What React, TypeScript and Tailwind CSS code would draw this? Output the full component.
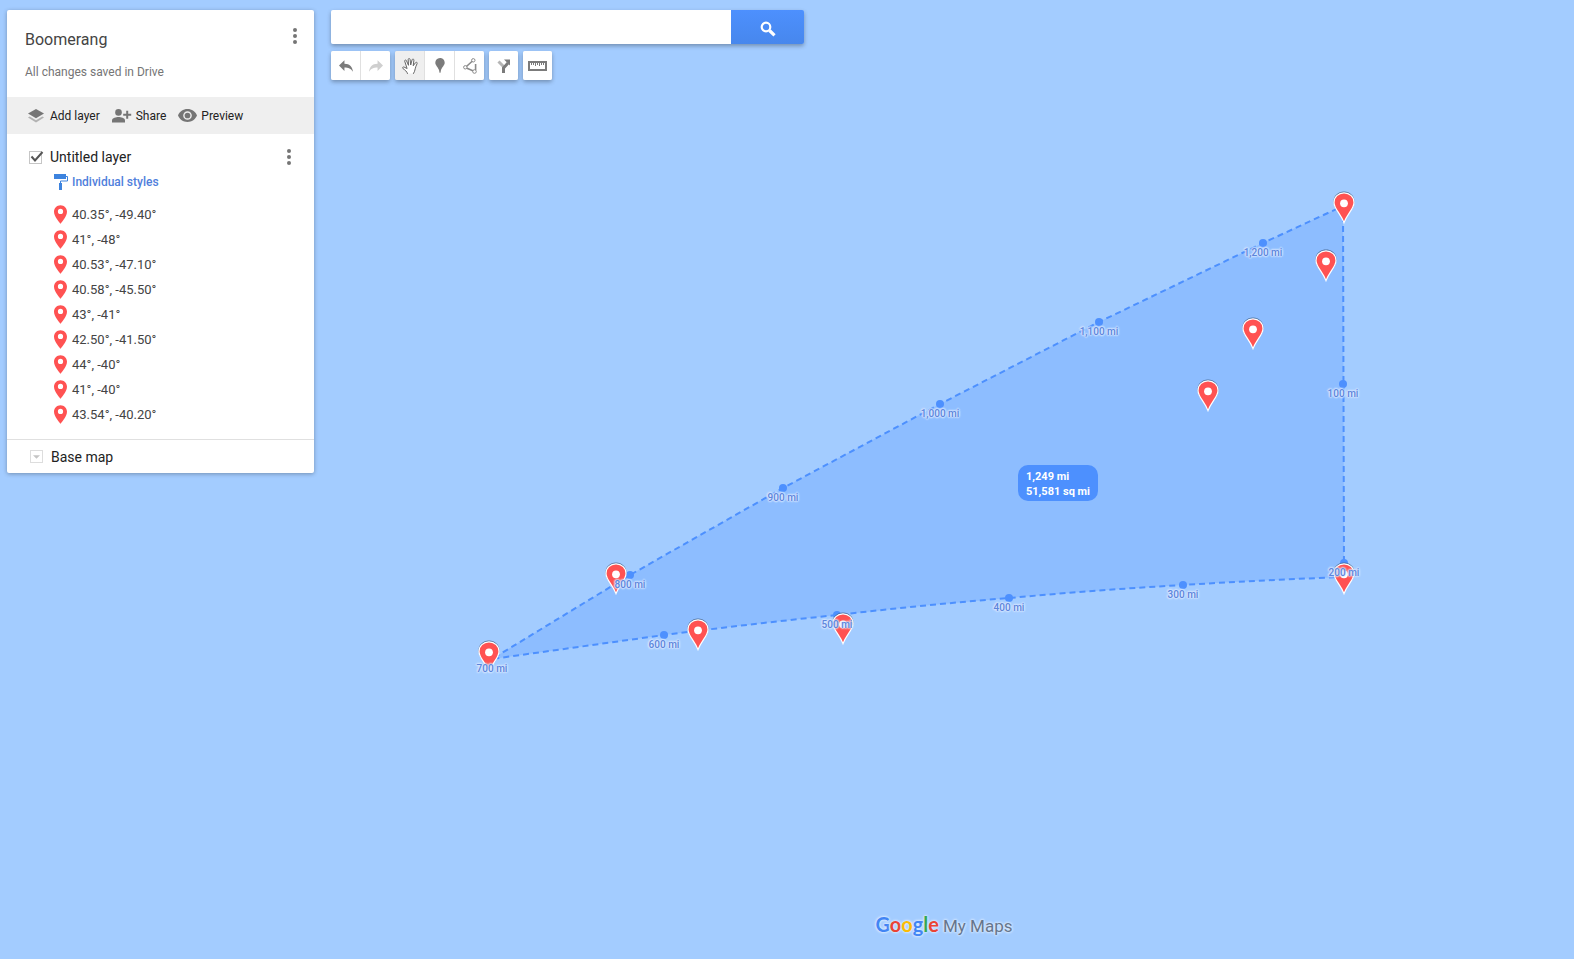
import React, { useState } from "react"
import clsx from "clsx"

const places = [
  "40.35°, -49.40°",
  "41°, -48°",
  "40.53°, -47.10°",
  "40.58°, -45.50°",
  "43°, -41°",
  "42.50°, -41.50°",
  "44°, -40°",
  "41°, -40°",
  "43.54°, -40.20°",
]

// left / top is the tip of the pin
const pins = [
  { x: 1344, y: 224 },
  { x: 1326, y: 282 },
  { x: 1253, y: 350 },
  { x: 1208, y: 412 },
  { x: 616, y: 595 },
  { x: 489, y: 673 },
  { x: 698, y: 651 },
  { x: 843, y: 645 },
  { x: 1344, y: 595 },
]

const miles = [
  { x: 1343, y: 384, label: "100 mi" },
  { x: 1344, y: 563, label: "200 mi" },
  { x: 1183, y: 585, label: "300 mi" },
  { x: 1009, y: 598, label: "400 mi" },
  { x: 837, y: 615, label: "500 mi" },
  { x: 664, y: 635, label: "600 mi" },
  { x: 492, y: 659, label: "700 mi" },
  { x: 630, y: 575, label: "800 mi" },
  { x: 783, y: 488, label: "900 mi" },
  { x: 940, y: 404, label: "1,000 mi" },
  { x: 1099, y: 322, label: "1,100 mi" },
  { x: 1263, y: 243, label: "1,200 mi" },
]

const outline =
  "M1343 206 L1344 577 Q1263 580 1183 585 Q1096 590 1009 598 Q923 605 837 615 Q750 624 664 635 L492 659 L630 575 L783 488 L940 404 L1099 322 L1263 243 Z"

const DotsIcon = () => (
  <svg viewBox="0 0 4 16" className="w-1 h-4 fill-[#757575]">
    <circle cx="2" cy="2" r="2" />
    <circle cx="2" cy="8" r="2" />
    <circle cx="2" cy="14" r="2" />
  </svg>
)

const LayersIcon = () => (
  <svg viewBox="0 0 16 14" className="w-4 h-[14px] fill-[#757575]">
    <path d="M8 0 16 4.600 8 9.200 0 4.600z" />
    <path d="M1.700 7.400 0 8.600 8 13.400 16 8.600 14.300 7.400 8 11.200z" opacity=".5" />
  </svg>
)

const ShareIcon = () => (
  <svg viewBox="0 0 20 14" className="w-5 h-[14px] fill-[#757575]">
    <circle cx="6.500" cy="3.400" r="3.300" />
    <path d="M0 13.500v-2.200c0-2.400 4.300-3.400 6.500-3.400s6.500 1 6.500 3.400v2.200z" />
    <path d="M14.200 1.800h2v3h3v2h-3v3h-2v-3h-3v-2h3z" />
  </svg>
)

const EyeIcon = () => (
  <svg viewBox="1 4.500 22 15" className="w-[19px] h-[13px] fill-[#757575]">
    <path
      fillRule="evenodd"
      d="M12 4.500C7 4.500 2.730 7.610 1 12c1.730 4.390 6 7.500 11 7.500s9.270-3.110 11-7.500c-1.730-4.390-6-7.500-11-7.500zM12 17a5 5 0 1 1 0-10 5 5 0 0 1 0 10z"
    />
    <circle cx="12" cy="12" r="3.300" />
  </svg>
)

const RollerIcon = () => (
  <svg viewBox="0 0 14 16" className="w-[14px] h-4">
    <path d="M0 0h12v5H0zM5 9h3v7H5z" fill="#3d83de" />
    <path d="M12 2.500h1.500v4.500H6.500v2" fill="none" stroke="#3d83de" />
  </svg>
)

const ListPin = () => (
  <svg viewBox="5 2 14 20" className="w-[13px] h-[19px] mb-px fill-[#ff5252]">
    <path d="M12 2C8.130 2 5 5.130 5 9c0 5.250 7 13 7 13s7-7.750 7-13c0-3.870-3.130-7-7-7zm0 9.500a2.800 2.800 0 1 1 0-5.600 2.800 2.800 0 0 1 0 5.600z" />
  </svg>
)

const MapPin = () => (
  <svg viewBox="0 0 24 34" className="block w-6 h-[34px]">
    <path
      d="M12 1.500C6 1.500 1.500 5.900 1.500 11.500c0 7 6.700 11 10.500 20 3.800-9 10.500-13 10.500-20C22.500 5.900 18 1.500 12 1.500z"
      fill="#3b5a80"
      opacity=".75"
    />
    <path
      d="M12 2.900C6.300 2.900 2 7 2 12.400c0 6.400 6.500 10.800 10 20.200 3.500-9.400 10-13.800 10-20.200 0-5.400-4.300-9.500-10-9.500z"
      fill="#ff5252"
      stroke="#fff"
      strokeWidth="1.200"
    />
    <circle cx="12" cy="13.300" r="3.900" fill="#fff" />
  </svg>
)

const ReplyIcon = ({ flip }: { flip?: boolean }) => (
  <svg
    viewBox="3 5 18 15"
    className={clsx("w-[14px] h-3", flip ? "-scale-x-100 fill-[#cfcfcf]" : "fill-[#7b7b7b]")}
  >
    <path d="M10 9.500V5l-7 7 7 7v-4.600c5 0 8.500 1.200 11 5.600-.500-6-4-10.500-11-10.500z" />
  </svg>
)

const HandIcon = () => (
  <svg
    viewBox="0 0 16 16"
    className="w-4 h-4 fill-white stroke-[#666]"
    strokeLinejoin="round"
    strokeLinecap="round"
  >
    <path d="M5.500 15.500C5 13.500 3 12 .9 10.500c-.8-.9.100-1.900 1.200-1.400l3 1.400L2.700 3.200c-.3-1.200 1.200-1.700 1.700-.6L6.500 7.300 6.200 1.500C6.200.2 7.900.2 8.100 1.500L8.700 7l1.400-5.200c.3-1.200 1.900-.9 1.800.4L11.200 7.800 13.500 4.700c.7-1 2.100-.2 1.600.9-.9 2-1.500 3.200-1.900 5.200-.3 1.700-.8 3.200-1.700 4.700" />
  </svg>
)

const MarkerIcon = () => (
  <svg viewBox="0 0 10 15" className="w-[10px] h-[15px] fill-[#7b7b7b]">
    <path d="M5 0C2 0 .3 2.200.3 4.700.3 7.300 2.900 8.800 4 12l.5 2.800h1L6 12c1.100-3.200 3.700-4.700 3.700-7.300C9.700 2.200 8 0 5 0z" />
  </svg>
)

const LineIcon = () => (
  <svg viewBox="0 0 14 16" className="w-[14px] h-4 fill-white stroke-[#8a8a8a]">
    <path d="M2.300 9.500 10 2.500M2.300 9.500l8.700 3.800M12.600 6v6" fill="none" strokeWidth="1.600" />
    <circle cx="10.300" cy="2.300" r="1.700" />
    <circle cx="2.300" cy="9.300" r="1.700" />
    <circle cx="11.500" cy="13.500" r="1.800" />
  </svg>
)

const DirectionsIcon = () => (
  <svg viewBox="0 0 14 14" className="w-[14px] h-[14px]">
    <path d="M1.500 2.500 7 8" stroke="#b5b5b5" strokeWidth="3" fill="none" />
    <path d="M6.500 14V9l4.500-5" stroke="#7b7b7b" strokeWidth="3" fill="none" />
    <path d="M7 .5h6v6z" fill="#7b7b7b" />
  </svg>
)

const RulerIcon = () => (
  <svg viewBox="0 0 19 10" className="w-[19px] h-[10px]">
    <path d="M1 1h17v8H1z" fill="#fff" stroke="#7b7b7b" strokeWidth="2" />
    <path
      d="M3.500 1v3M5.500 1v3M7.500 1v4M9.500 1v3M11.500 1v4M13.500 1v3M15.500 1v3"
      stroke="#7b7b7b"
    />
  </svg>
)

const SearchIcon = () => (
  <svg viewBox="0 0 16 16" className="w-4 h-4 mt-1" fill="none" stroke="#fff">
    <circle cx="6" cy="6" r="4.300" strokeWidth="2.200" />
    <path d="m9.500 9.500 5 4.800" strokeWidth="3.200" />
  </svg>
)

const MapCanvas = () => (
  <div className="absolute inset-0 overflow-hidden">
    <svg className="absolute left-0 top-0 w-[1574px] h-[959px]" viewBox="0 0 1574 959">
      <path
        d={outline}
        fill="#4d90fe"
        fillOpacity=".25"
        stroke="#4d90fe"
        strokeWidth="2"
        strokeDasharray="6 4"
      />
      {miles.map((m) => (
        <circle key={m.label} cx={m.x} cy={m.y} r="4" fill="#4d90fe" />
      ))}
    </svg>
    {pins.map((p) => (
      <div
        key={`${p.x}-${p.y}`}
        className="absolute -translate-x-1/2 -translate-y-full"
        style={{ left: p.x, top: p.y }}
      >
        <MapPin />
      </div>
    ))}
    {miles.map((m) => (
      <span
        key={m.label}
        className="absolute -translate-x-1/2 mt-1 text-[10px] leading-3 font-medium whitespace-nowrap text-[#5c85dc] [text-shadow:0_0_2px_#dbe9ff,0_0_2px_#dbe9ff,0_0_2px_#dbe9ff,0_0_2px_#dbe9ff,0_0_3px_#dbe9ff]"
        style={{ left: m.x, top: m.y }}
      >
        {m.label}
      </span>
    ))}
    <div className="absolute left-[1018px] top-[465px] rounded-[10px] bg-[#4d90fe] px-2 pt-1 pb-[2px] text-[11px] leading-[15px] font-bold text-white">
      <p>1,249 mi</p>
      <p>51,581 sq mi</p>
    </div>
  </div>
)

const SidePanel = () => {
  const [visible, setVisible] = useState(true)

  return (
    <aside className="relative w-[307px] shrink-0 self-start rounded-[2px] bg-white shadow-[0_1px_4px_rgba(0,0,0,0.3)]">
      <header className="flex items-start justify-between pl-[18px] pr-[17px] pt-[18px] h-[87px]">
        <div>
          <h1 className="text-base leading-6 text-[#444]">Boomerang</h1>
          <p className="mt-3 text-xs text-[#757575]">All changes saved in Drive</p>
        </div>
        <button aria-label="Map options">
          <DotsIcon />
        </button>
      </header>
      <nav className="flex items-center h-[37px] bg-[#efefef] pl-[21px] text-xs text-[#222]">
        <button className="flex items-center gap-[6px]">
          <LayersIcon /> Add layer
        </button>
        <button className="flex items-center gap-1 ml-3">
          <ShareIcon /> Share
        </button>
        <button className="flex items-center gap-1 ml-3">
          <EyeIcon /> Preview
        </button>
      </nav>
      <section className="pt-[13px] pb-3">
        <div className="flex items-center justify-between pl-[22px] pr-[23px]">
          <label className="flex items-center gap-2 text-sm text-[#222]">
            <span className="relative block w-[13px] h-[13px]">
              <input
                type="checkbox"
                checked={visible}
                onChange={() => setVisible(!visible)}
                className="block w-[13px] h-[13px] appearance-none border border-[#c6c6c6] bg-white"
              />
              {visible ? (
                <svg
                  viewBox="0 0 15 13"
                  className="pointer-events-none absolute left-0 top-0 w-[15px] h-[13px]"
                >
                  <path d="m2.500 5.500 3.500 4L13.500 1" fill="none" stroke="#555" strokeWidth="2" />
                </svg>
              ) : null}
            </span>
            Untitled layer
          </label>
          <button aria-label="Layer options">
            <DotsIcon />
          </button>
        </div>
        <button className="flex items-center gap-1 ml-[47px] mt-[7px] text-xs font-medium text-[#5080dc]">
          <RollerIcon /> Individual styles
        </button>
        <ul className="mt-3 pl-[47px]">
          {places.map((place) => (
            <li key={place} className="flex items-center gap-[5px] h-[25px] text-[13px] text-[#444]">
              <ListPin />
              {place}
            </li>
          ))}
        </ul>
      </section>
      <button className="flex items-center gap-2 w-full h-[34px] border-t border-[#e0e0e0] pl-[23px] text-sm text-[#222]">
        <span className="flex items-center justify-center w-[13px] h-[13px] border border-[#ddd]">
          <svg viewBox="0 0 8 4" className="w-[7px] h-1 fill-[#c4c4c4]">
            <path d="M0 0h8L4 4z" />
          </svg>
        </span>
        Base map
      </button>
    </aside>
  )
}

const ToolGroup = ({ children }: { children: React.ReactNode }) => (
  <div className="flex gap-px rounded-[2px] bg-[#e0e0e0] overflow-hidden shadow-[0_2px_4px_rgba(0,0,0,0.3)]">
    {children}
  </div>
)

const Tool = ({
  label,
  active,
  children,
}: {
  label: string
  active?: boolean
  children: React.ReactNode
}) => (
  <button
    aria-label={label}
    className={clsx(
      "flex items-center justify-center w-[29px] h-[29px]",
      active ? "bg-[#efefef]" : "bg-white"
    )}
  >
    {children}
  </button>
)

const App = () => {
  return (
    <main className="relative flex gap-[17px] min-h-screen pl-[7px] pt-[10px] bg-[#a3ccff] font-['Roboto',sans-serif]">
      <MapCanvas />
      <SidePanel />
      <div className="relative flex flex-1 flex-col">
        <form
          className="flex w-full max-w-[473px] h-[34px] rounded-[2px] shadow-[0_2px_4px_rgba(0,0,0,0.3)]"
          onSubmit={(e) => e.preventDefault()}
        >
          <input
            type="text"
            aria-label="Search"
            className="min-w-0 flex-1 rounded-l-[2px] bg-white px-3 text-sm outline-none"
          />
          <button
            aria-label="Search the map"
            className="flex items-center justify-center w-[73px] rounded-r-[2px] bg-linear-to-b from-[#4d90fe] to-[#4787ed]"
          >
            <SearchIcon />
          </button>
        </form>
        <div className="flex mt-[7px] gap-[5px]">
          <ToolGroup>
            <Tool label="Undo">
              <ReplyIcon />
            </Tool>
            <Tool label="Redo">
              <ReplyIcon flip />
            </Tool>
          </ToolGroup>
          <ToolGroup>
            <Tool label="Select items" active>
              <HandIcon />
            </Tool>
            <Tool label="Add marker">
              <MarkerIcon />
            </Tool>
            <Tool label="Draw a line">
              <LineIcon />
            </Tool>
          </ToolGroup>
          <ToolGroup>
            <Tool label="Add directions">
              <DirectionsIcon />
            </Tool>
          </ToolGroup>
          <ToolGroup>
            <Tool label="Measure distances and areas">
              <RulerIcon />
            </Tool>
          </ToolGroup>
        </div>
        <footer className="mt-auto mr-[17px] mb-[21px] flex items-baseline justify-center gap-1 leading-6 whitespace-nowrap [text-shadow:0_0_2px_#d6e8ff,0_0_2px_#d6e8ff,0_0_3px_#d6e8ff,0_0_3px_#d6e8ff]">
          <span className="font-['Lato',sans-serif] text-xl leading-6 font-bold">
            <span className="text-[#4285f4]">G</span>
            <span className="text-[#ea4335]">o</span>
            <span className="text-[#fbbc05]">o</span>
            <span className="text-[#4285f4]">g</span>
            <span className="text-[#34a853]">l</span>
            <span className="text-[#ea4335]">e</span>
          </span>
          <span className="text-[17px] text-[#66758c]">My Maps</span>
        </footer>
      </div>
    </main>
  )
}

export default App
